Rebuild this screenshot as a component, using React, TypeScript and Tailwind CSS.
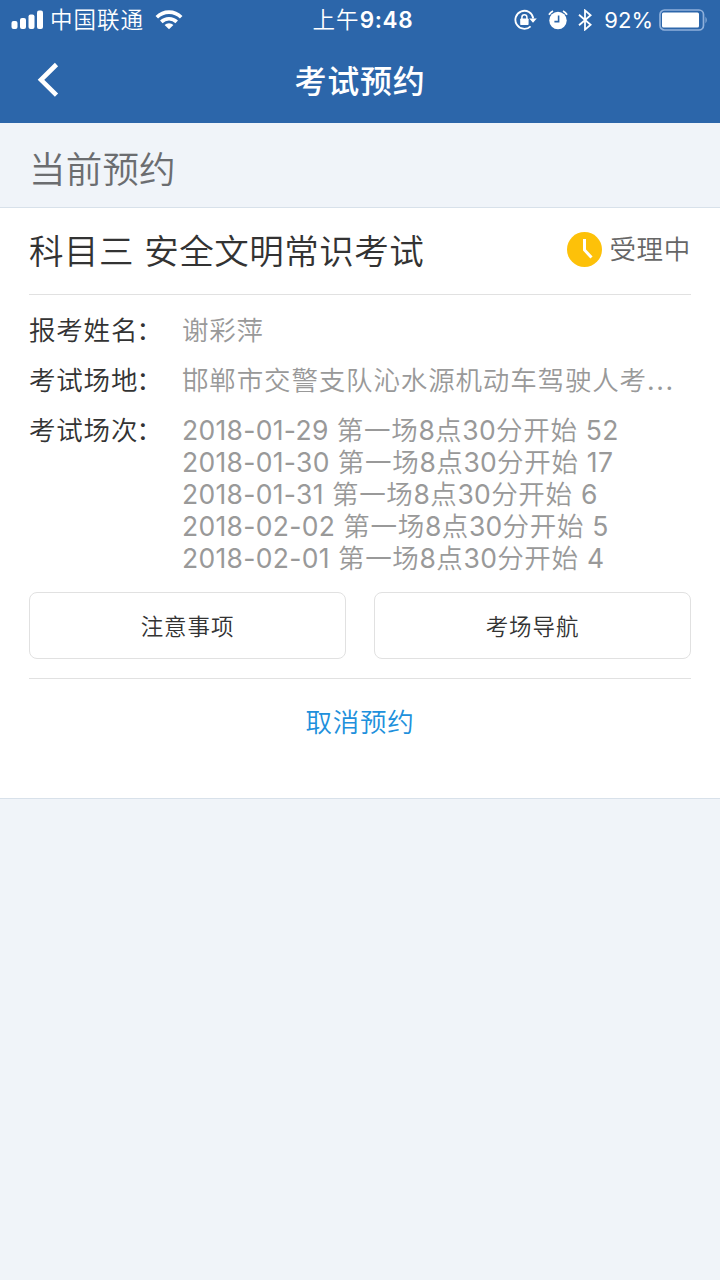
const sessions = [
  { date: "2018-01-29", count: 52 },
  { date: "2018-01-30", count: 17 },
  { date: "2018-01-31", count: 6 },
  { date: "2018-02-02", count: 5 },
  { date: "2018-02-01", count: 4 },
]

function StatusBar() {
  return (
    <div className="grid h-10 grid-cols-[1fr_auto_1fr] items-center text-[22.5px] leading-10">
      <div className="flex items-center pl-[11px]">
        <svg className="h-5 w-8" viewBox="0 0 32 20" fill="currentColor">
          <rect x="0.5" y="11" width="6" height="8" rx="2" />
          <rect x="9" y="8" width="6" height="11" rx="2" />
          <rect x="17.5" y="4.5" width="6" height="14.5" rx="2" />
          <rect x="26" y="0.5" width="6" height="18.5" rx="2" />
        </svg>
        <span className="ml-[7px] tracking-[1px]">中国联通</span>
        <svg className="ml-[11px] h-5 w-7" viewBox="0 0 28 20" fill="none" stroke="currentColor" strokeWidth="3.6">
          <path d="M1.8 7.2a17.3 17.3 0 0 1 24.4 0" />
          <path d="M6.3 11.9a11 11 0 0 1 15.4 0" />
          <path d="M14 19.3l-4.4-4.2a6.3 6.3 0 0 1 8.8 0z" fill="currentColor" stroke="none" />
        </svg>
      </div>
      <div className="pl-[6px] tracking-[1px]">
        上午<span className="font-semibold tracking-[0.7px]">9:48</span>
      </div>
      <div className="flex items-center justify-end pr-3">
        <svg className="h-[22px] w-[23px]" viewBox="0 0 23 22" fill="none" stroke="currentColor" strokeWidth="1.8">
          <path d="M16.6 17.3A9 9 0 1 1 19.3 9.5" />
          <path d="M15.2 9.4h7.6l-3.8 4.4z" fill="currentColor" stroke="none" />
          <rect x="6.2" y="9.4" width="8.4" height="6.6" rx="0.8" fill="currentColor" stroke="none" />
          <path d="M7.9 10V8.3a2.5 2.5 0 0 1 5 0V10" strokeWidth="1.5" />
        </svg>
        <svg className="ml-[11px] h-5 w-5" viewBox="0 0 20 20" fill="none">
          <circle cx="10" cy="10.5" r="8.7" fill="currentColor" />
          <path d="M1 4.8A9 9 0 0 1 5 1M15 1a9 9 0 0 1 4 3.8" stroke="currentColor" strokeWidth="1.8" />
          <path d="M10.6 5.6v6H6.4" stroke="#2c66aa" strokeWidth="1.6" />
        </svg>
        <svg className="ml-[10px] h-[22px] w-[14px]" viewBox="0 0 14 22" fill="none" stroke="currentColor" strokeWidth="1.8">
          <path d="M1 5.8l11.6 10L7 20.6V1.4l5.6 4.8L1 16.2" />
        </svg>
        <span className="ml-[12px] text-[22px] font-normal">92%</span>
        <svg className="ml-[6px] h-[22px] w-[49px]" viewBox="0 0 49 22">
          <rect x="1" y="1" width="43.5" height="20" rx="4.5" fill="none" stroke="#8fb0db" strokeWidth="1.7" />
          <rect x="3" y="3.5" width="37" height="15" rx="1.5" fill="#fff" />
          <path d="M46.5 7.5q2.5 3.5 0 7z" fill="#8fb0db" />
        </svg>
      </div>
    </div>
  )
}

function Num({ children }: { children: React.ReactNode }) {
  return <span className="font-normal tracking-[0.3px]">{children}</span>
}

function Field({ label, children }: { label: string; children: React.ReactNode }) {
  return (
    <div className="flex leading-8">
      <div className="flex w-[153px] shrink-0 tracking-[0.8px] text-[#333]">
        <span>{label}</span>
        <span className="-ml-0.5">：</span>
      </div>
      <div className="min-w-0 flex-1 text-[#999]">{children}</div>
    </div>
  )
}

export default function App() {
  return (
    <div className="min-h-[1280px] w-[720px] bg-[#f0f4f9] font-['Inter','Noto_Sans_CJK_SC',sans-serif] font-[350]">
      <header className="h-[123px] bg-[#2c66aa] text-white">
        <StatusBar />
        <div className="grid h-20 grid-cols-[1fr_auto_1fr] items-center">
          <svg className="ml-9 h-9 w-6" viewBox="0 0 24 36" fill="none" stroke="currentColor" strokeWidth="4.6">
            <path d="M20.5 2.5L5 17.8l15.5 15.3" />
          </svg>
          <h1 className="pt-1 text-[32px] font-medium tracking-[0.7px]">考试预约</h1>
        </div>
      </header>

      <h2 className="flex h-[84px] items-center pt-2.5 pl-[29px] text-[36.5px] tracking-[0.2px] text-[#6b6d70]">当前预约</h2>

      <section className="h-[592px] border-y border-[#d8e1ea] bg-white px-[29px]">
        <div className="flex h-[87px] items-center justify-between border-b border-[#e1e1e1]">
          <h3 className="pt-0.5 text-[34.5px] tracking-[0.5px] text-[#333]">科目三 安全文明常识考试</h3>
          <div className="flex items-center pb-1 text-[26.5px] tracking-[0.7px] text-[#666]">
            <svg className="mr-[7px] size-[35px]" viewBox="0 0 35 35" fill="none">
              <circle cx="17.5" cy="17.5" r="17.5" fill="#fdc109" />
              <path d="M17.5 7v11l7 7.5" stroke="#fff" strokeWidth="3" />
            </svg>
            <span className="pt-0.5">受理中</span>
          </div>
        </div>

        <div className="flex flex-col gap-[18px] pt-[19px] text-[26.5px]">
          <Field label="报考姓名">
            <span className="tracking-[0.8px]">谢彩萍</span>
          </Field>
          <Field label="考试场地">
            <p className="tracking-[0.85px] whitespace-nowrap">
              邯郸市交警支队沁水源机动车驾驶人考<span className="font-normal tracking-[1.6px]">...</span>
            </p>
          </Field>
          <Field label="考试场次">
            {sessions.map((session) => (
              <p key={session.date} className="tracking-[0.7px] whitespace-nowrap">
                <Num>{session.date}</Num> 第一场<Num>8</Num>点<Num>30</Num>分开始 <Num>{session.count}</Num>
              </p>
            ))}
          </Field>
        </div>

        <div className="mt-[18px] flex gap-7 border-b border-[#e1e1e1] pb-[19px] text-[22.5px] tracking-[0.9px] text-[#333]">
          <button className="h-[67px] flex-1 rounded-lg border border-[#e1e1e1] pt-0.5">注意事项</button>
          <button className="h-[67px] flex-1 rounded-lg border border-[#e1e1e1] pt-0.5">考场导航</button>
        </div>

        <button className="flex h-[86px] w-full items-center justify-center pt-0.5 text-[26.5px] tracking-[0.7px] text-[#2090dc]">
          取消预约
        </button>
      </section>
    </div>
  )
}
